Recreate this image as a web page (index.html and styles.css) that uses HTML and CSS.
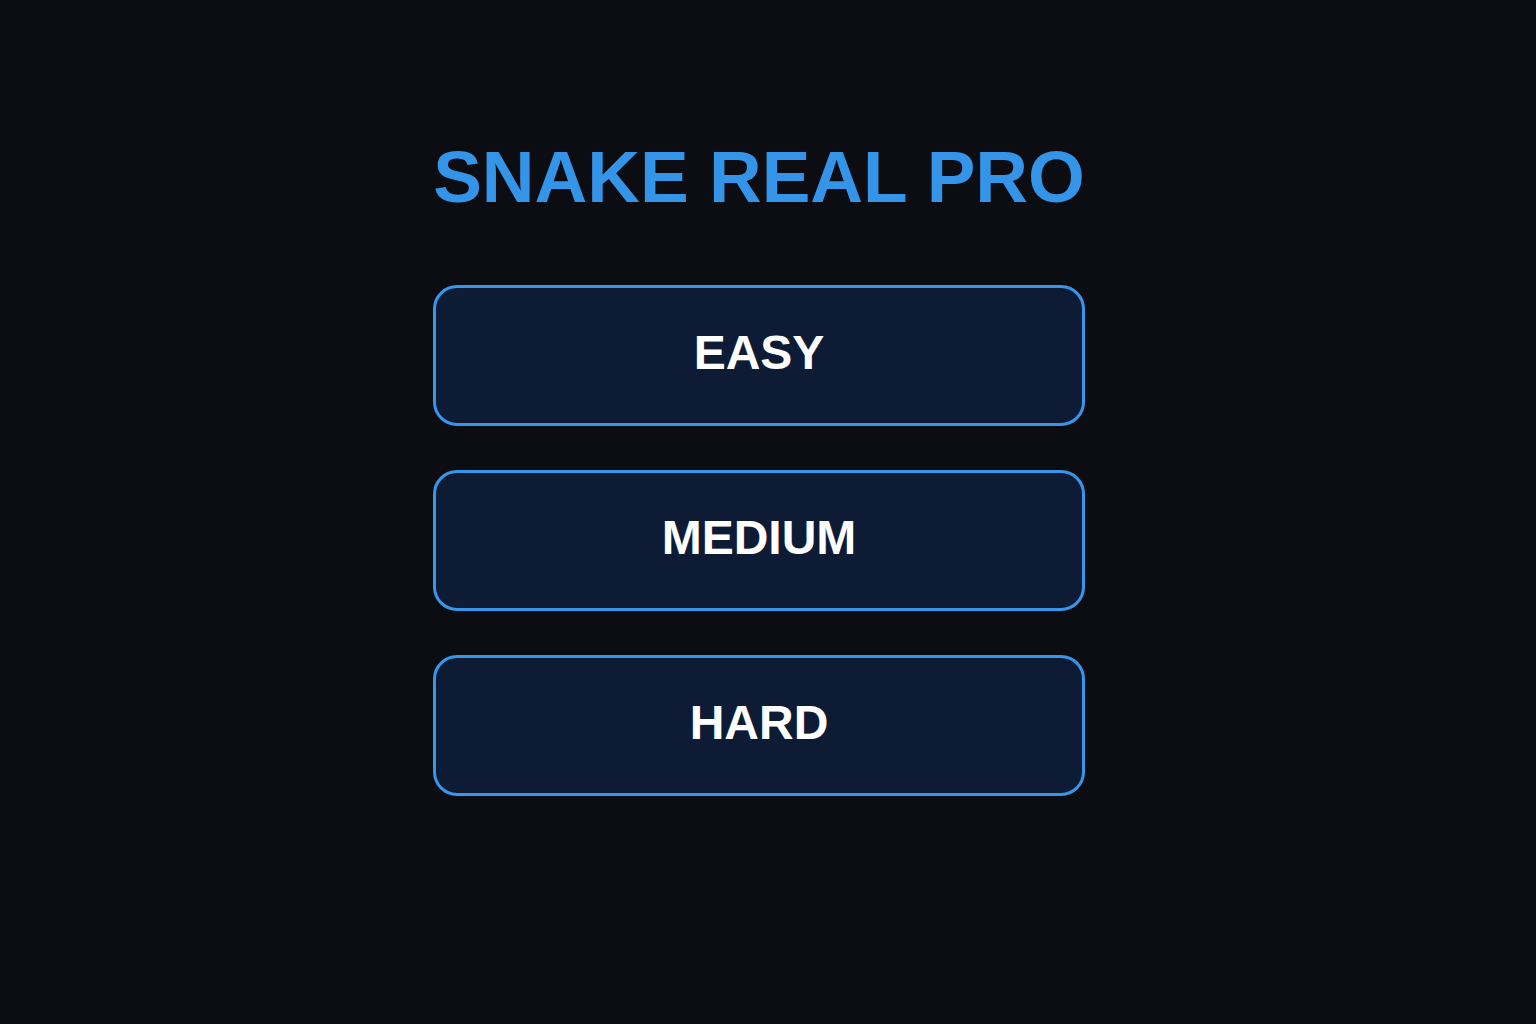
FILE: index.html
```html
<!DOCTYPE html>
<html lang="en">
<head>
    <meta charset="UTF-8">
    <meta name="viewport" content="width=device-width, initial-scale=1.0">
    <title>Snake Real Pro</title>
    <link rel="stylesheet" href="styles.css">
</head>
<body>
<div class="menu">
    <h1 class="title">SNAKE REAL PRO</h1>
    <div class="levels">
        <button class="level-btn" data-level="easy">EASY</button>
        <button class="level-btn" data-level="medium">MEDIUM</button>
        <button class="level-btn" data-level="hard">HARD</button>
    </div>
</div>
</body>
</html>
```

FILE: styles.css
```css
html, body {
    height: 100%;
}

body {
    font-family: "Liberation Sans", Arial, sans-serif;
    background-color: #0c0d12;
    color: #ffffff;
    margin: 0;
    padding: 0 18px 0 0;
    display: flex;
    justify-content: center;
    align-items: flex-start;
}

.menu {
    width: 652px;
    margin-top: 141px;
    display: flex;
    flex-direction: column;
}

.title {
    margin: 0 0 72px 0;
    font-size: 73px;
    line-height: 72px;
    font-weight: bold;
    text-align: center;
    color: #3394e8;
    white-space: nowrap;
}

.levels {
    display: flex;
    flex-direction: column;
    gap: 44px;
}

.level-btn {
    height: 141px;
    width: 100%;
    padding: 0 0 6px 0;
    background-color: #0d1b35;
    color: #ffffff;
    border: 3px solid #3896ea;
    border-radius: 24px;
    font-family: "Liberation Sans", Arial, sans-serif;
    font-size: 48px;
    font-weight: bold;
    cursor: pointer;
}

.level-btn:hover {
    background-color: #112446;
}
```
